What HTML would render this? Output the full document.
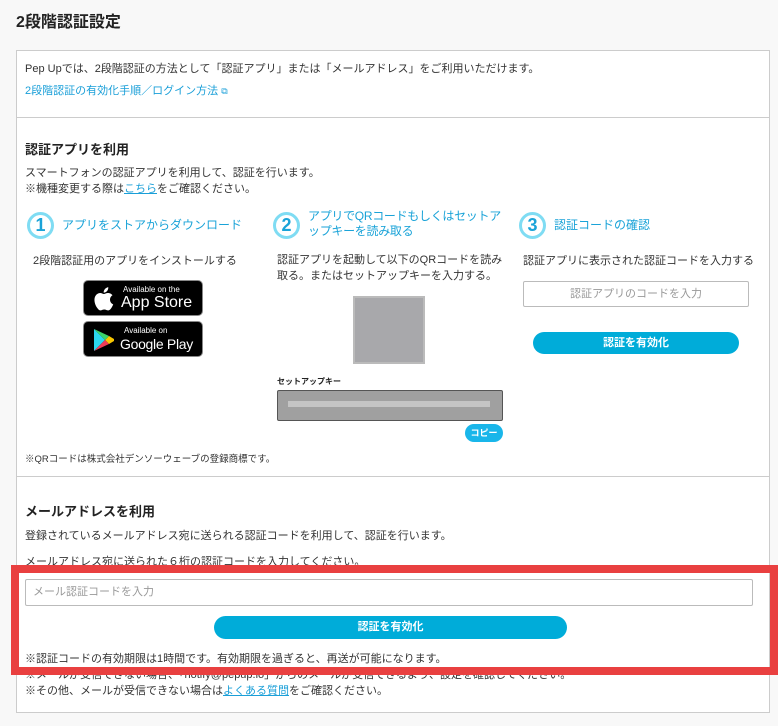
<!DOCTYPE html>
<html><head><meta charset="utf-8"><style>
*{box-sizing:border-box;margin:0;padding:0}
body{width:778px;height:726px;background:#f8f8f8;font-family:"Liberation Sans","Noto Sans CJK JP",sans-serif;color:#333;font-size:11px;position:relative;overflow:hidden}
.a{position:absolute}
h1{position:absolute;left:16px;top:8px;font-size:16px;font-weight:bold;color:#222}
.card{position:absolute;left:16px;top:50px;width:754px;height:663px;background:#fff;border:1px solid #ccc}
.hr{position:absolute;left:0;width:752px;border-top:1px solid #ccc}
.link{color:#1a9fd8}
h2{position:absolute;font-size:13px;font-weight:bold;color:#222}
.num{position:absolute;width:27px;height:27px;border-radius:50%;border:3px solid #7fdcf3;color:#1aa3d8;font-weight:bold;font-size:18px;text-align:center;line-height:21px}
.st{position:absolute;color:#1aa3d8;font-size:12px;line-height:15px;white-space:nowrap}
.btn{position:absolute;background:#00acd9;color:#fff;border-radius:12px;text-align:center;font-weight:bold;font-size:11px}
.badge{position:absolute;background:#000;border-radius:5px;color:#fff;border:1px solid #888;white-space:nowrap;overflow:hidden}
.inp{position:absolute;border:1px solid #bbb;border-radius:2px;background:#fff;color:#999;font-size:11px}
</style></head><body>
<h1>2段階認証設定</h1>
<div class="card">
<div class="a" style="left:8px;top:9px">Pep Upでは、2段階認証の方法として「認証アプリ」または「メールアドレス」をご利用いただけます。</div>
<div class="a link" style="left:8px;top:31px">2段階認証の有効化手順／ログイン方法 <span style="font-size:9px">⧉</span></div>
<div class="hr" style="top:66px"></div>
<h2 style="left:8px;top:88px">認証アプリを利用</h2>
<div class="a" style="left:8px;top:114px;line-height:16px">スマートフォンの認証アプリを利用して、認証を行います。<br>※機種変更する際は<span class="link" style="text-decoration:underline">こちら</span>をご確認ください。</div>

<div class="num" style="left:10px;top:161px">1</div>
<div class="st" style="left:45px;top:167px">アプリをストアからダウンロード</div>
<div class="a" style="left:16px;top:201px">2段階認証用のアプリをインストールする</div>
<div class="badge" style="left:66px;top:229px;width:120px;height:36px">
<svg class="a" style="left:10px;top:6px" width="20" height="24" viewBox="0 0 20 24"><path fill="#fff" d="M16 12.7c0-3 2.4-4.3 2.5-4.4-1.4-2-3.5-2.3-4.2-2.3-1.8-.2-3.5 1-4.4 1-.9 0-2.3-1-3.8-1C4.2 6.1 2.4 7.2 1.4 9c-2 3.5-.5 8.7 1.5 11.5 1 1.4 2.1 2.9 3.6 2.9 1.5-.1 2-.9 3.8-.9 1.8 0 2.3.9 3.8.9 1.600 0 2.6-1.4 3.5-2.8 1.1-1.6 1.6-3.2 1.6-3.3-.1 0-3.1-1.2-3.2-4.6zM13.1 4c.8-1 1.3-2.3 1.2-3.7-1.2.1-2.6.8-3.4 1.8-.7.8-1.4 2.2-1.2 3.5 1.3.1 2.6-.7 3.4-1.6z"/></svg>
<div class="a" style="left:39px;top:4px;font-size:8px">Available on the</div>
<div class="a" style="left:37px;top:13px;font-size:16px">App Store</div></div>
<div class="badge" style="left:66px;top:270px;width:120px;height:36px">
<svg class="a" style="left:8px;top:6px" width="24" height="24" viewBox="0 0 24 24"><path fill="#2bd6ee" d="M2 1l11 11L2 23z"/><path fill="#f7c600" d="M13 12l4-4 5 3v2l-5 3z"/><path fill="#3bd46a" d="M2 1l15 7-4 4z"/><path fill="#ee3b57" d="M2 23l11-11 4 4z"/></svg>
<div class="a" style="left:40px;top:4px;font-size:8px">Available on</div>
<div class="a" style="left:36px;top:14px;font-size:14px;letter-spacing:-0.3px">Google Play</div></div>

<div class="num" style="left:256px;top:161px">2</div>
<div class="st" style="left:291px;top:158px;letter-spacing:-0.3px">アプリでQRコードもしくはセットア<br>ップキーを読み取る</div>
<div class="a" style="left:260px;top:201px;line-height:16px">認証アプリを起動して以下のQRコードを読み<br>取る。またはセットアップキーを入力する。</div>
<div class="a" style="left:336px;top:245px;width:72px;height:68px;background:#a8a8ab;border:2px solid #bbb"></div>
<div class="a" style="left:260px;top:325px;font-size:8px;font-weight:bold;color:#222">セットアップキー</div>
<div class="a" style="left:260px;top:339px;width:226px;height:31px;background:#a0a0a0;border:1px solid #555;border-radius:2px"><div class="a" style="left:10px;top:10px;width:202px;height:6px;background:#c4c4c4"></div></div>
<div class="btn" style="left:448px;top:373px;width:38px;height:18px;line-height:18px;font-size:9px;border-radius:9px;background:#19b6ea">コピー</div>

<div class="num" style="left:502px;top:161px">3</div>
<div class="st" style="left:537px;top:167px">認証コードの確認</div>
<div class="a" style="left:506px;top:201px">認証アプリに表示された認証コードを入力する</div>
<div class="inp" style="left:506px;top:230px;width:226px;height:26px;text-align:center;line-height:24px">認証アプリのコードを入力</div>
<div class="btn" style="left:516px;top:281px;width:206px;height:22px;line-height:22px">認証を有効化</div>

<div class="a" style="left:8px;top:400px;font-size:9.5px">※QRコードは株式会社デンソーウェーブの登録商標です。</div>
<div class="hr" style="top:425px"></div>
<h2 style="left:8px;top:450px">メールアドレスを利用</h2>
<div class="a" style="left:8px;top:476px">登録されているメールアドレス宛に送られる認証コードを利用して、認証を行います。</div>
<div class="a" style="left:8px;top:502px">メールアドレス宛に送られた６桁の認証コードを入力してください。</div>
<div class="inp" style="left:8px;top:528px;width:728px;height:27px;line-height:25px;padding-left:7px">メール認証コードを入力</div>
<div class="btn" style="left:197px;top:565px;width:353px;height:23px;line-height:23px">認証を有効化</div>
<div class="a" style="left:8px;top:599px">※認証コードの有効期限は1時間です。有効期限を過ぎると、再送が可能になります。</div>
<div class="a" style="left:8px;top:615px">※メールが受信できない場合、「notify@pepup.io」からのメールが受信できるよう、設定を確認してください。</div>
<div class="a" style="left:8px;top:631px">※その他、メールが受信できない場合は<span class="link" style="text-decoration:underline">よくある質問</span>をご確認ください。</div>
</div>
<div class="a" style="left:11px;top:565px;width:767px;height:110px;border:8px solid #e94040"></div>
</body></html>
